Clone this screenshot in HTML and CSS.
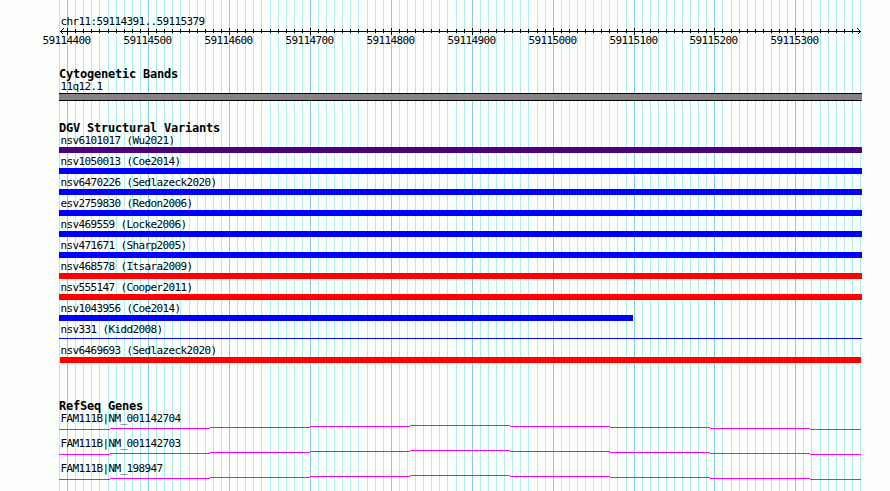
FILE: index.html
```
<!DOCTYPE html>
<html lang="en">
<head>
    <meta charset="UTF-8">
    <title>chr11:59114391..59115379</title>
    <link rel="stylesheet" href="styles.css">
</head>
<body>

    <div class="panel">
        <svg class="grid" width="890" height="491" shape-rendering="crispEdges"></svg>

        <div class="ruler">
            <div class="label">chr11:59114391..59115379</div>
            <svg class="axis" width="803" height="22" viewBox="59 28 803 22" shape-rendering="crispEdges">
                <rect x="60" y="31" width="801" height="1"/>
                <path class="arrow" d="M63.5 28.5L60.5 31.5L63.5 34.5M857.5 28.5L860.5 31.5L857.5 34.5"/>
            </svg>
        </div>

        <section class="track bands">
            <h2>Cytogenetic Bands</h2>
            <div class="label">11q12.1</div>
            <div class="band"></div>
        </section>

        <section class="track variants">
            <h2>DGV Structural Variants</h2>
            <div class="variant"><div class="label">nsv6101017 (Wu2021)</div><div class="bar complex"></div></div>
            <div class="variant"><div class="label">nsv1050013 (Coe2014)</div><div class="bar gain"></div></div>
            <div class="variant"><div class="label">nsv6470226 (Sedlazeck2020)</div><div class="bar gain"></div></div>
            <div class="variant"><div class="label">esv2759830 (Redon2006)</div><div class="bar gain"></div></div>
            <div class="variant"><div class="label">nsv469559 (Locke2006)</div><div class="bar gain"></div></div>
            <div class="variant"><div class="label">nsv471671 (Sharp2005)</div><div class="bar gain"></div></div>
            <div class="variant"><div class="label">nsv468578 (Itsara2009)</div><div class="bar loss"></div></div>
            <div class="variant"><div class="label">nsv555147 (Cooper2011)</div><div class="bar loss"></div></div>
            <div class="variant"><div class="label">nsv1043956 (Coe2014)</div><div class="bar gain partial"></div></div>
            <div class="variant"><div class="label">nsv331 (Kidd2008)</div><div class="bar gain thin"></div></div>
            <div class="variant"><div class="label">nsv6469693 (Sedlazeck2020)</div><div class="bar loss inset"></div></div>
        </section>

        <section class="track genes">
            <h2>RefSeq Genes</h2>
            <div class="gene"><div class="label">FAM111B|NM_001142704</div></div>
            <div class="gene"><div class="label">FAM111B|NM_001142703</div></div>
            <div class="gene"><div class="label">FAM111B|NM_198947</div></div>
        </section>
    </div>

    <script>
        const NS = 'http://www.w3.org/2000/svg';
        const grid = document.querySelector('.grid');
        const axis = document.querySelector('.axis');

        function addRect(parent, x, y, width, height, cls) {
            const r = document.createElementNS(NS, 'rect');
            r.setAttribute('x', x);
            r.setAttribute('y', y);
            r.setAttribute('width', width);
            r.setAttribute('height', height);
            if (cls) r.setAttribute('class', cls);
            parent.appendChild(r);
        }

        // one line every 10 bp: 8px apart, 9px where the position rounds up
        const wide = [5, 15, 25, 37, 48, 58, 69, 82, 93];
        let x = 59;
        for (let n = -1; n <= 98; n++) {
            if (n >= 0) x += wide.includes(n) ? 9 : 8;
            const major = n % 10 === 0;
            addRect(grid, x, 0, 1, 491, major ? 'major' : 'minor');
            if (n >= 0 && n < 98) {
                addRect(axis, x, major ? 28 : 29, 1, major ? 7 : 4);
            }
            if (major) {
                const t = document.createElementNS(NS, 'text');
                t.setAttribute('x', x - 24.5);
                t.setAttribute('y', 44);
                t.textContent = 59114400 + n * 10;
                axis.appendChild(t);
            }
        }

        // intron line of each gene, a shallow staircase
        const steps = [[59, 110, 4], [110, 210, 3], [210, 310, 2], [310, 410, 1], [410, 510, 0],
                       [510, 610, 1], [610, 710, 2], [710, 810, 3], [810, 861, 4]];
        document.querySelectorAll('.gene').forEach(gene => {
            const svg = document.createElementNS(NS, 'svg');
            svg.setAttribute('width', 803);
            svg.setAttribute('height', 5);
            svg.setAttribute('viewBox', '59 0 803 5');
            svg.setAttribute('class', 'intron');
            steps.forEach(([from, to, y]) => addRect(svg, from, y, to - from, 1));
            gene.appendChild(svg);
        });
    </script>

</body>
</html>
```
FILE: styles.css
```
body {
    margin: 0;
    background: #fdfffd;
    color: #000;
    font-family: "DejaVu Sans Mono", monospace;
    font-size: 11px;
    line-height: 13px;
    letter-spacing: -0.622px;
    overflow: hidden;
}
svg {
    display: block;
}
.panel {
    position: relative;
    box-sizing: border-box;
    width: 890px;
    height: 491px;
    padding: 15px 28px 0 59px;
    overflow: hidden;
}

/* Grid lines behind all tracks */
.grid {
    position: absolute;
    top: 0;
    left: 0;
    z-index: -1;
}
.minor {
    fill: #afeeee;
}
.major {
    fill: #87ceeb;
}

.label {
    height: 13px;
    padding-left: 1.4px;
    white-space: pre;
}
.axis {
    overflow: visible;
}
.arrow {
    fill: none;
    stroke: #000;
}

/* Tracks */
.track h2 {
    height: 13px;
    margin: 0;
    font-size: 12px;
    line-height: 15px;
    font-weight: bold;
    letter-spacing: -0.224px;
}
.bands {
    margin-top: 17px;
}
.band {
    box-sizing: border-box;
    height: 8px;
    background: #848284;
    border-top: 1px solid #000;
    border-bottom: 1px solid #000;
}
.variants {
    margin-top: 20px;
}
.variant {
    height: 21px;
}
.bar {
    height: 6px;
}
.complex {
    background: #4b0082;
}
.gain {
    background: #0000ff;
}
.loss {
    background: #ff0000;
}
.partial {
    width: 574px;
}
.thin {
    height: 1px;
    margin-top: 2px;
}
.inset {
    margin: 0 1px;
}
.genes {
    margin-top: 34px;
}
.gene {
    height: 25px;
}
.intron {
    fill: #ff00ff;
    shape-rendering: crispEdges;
}
```
